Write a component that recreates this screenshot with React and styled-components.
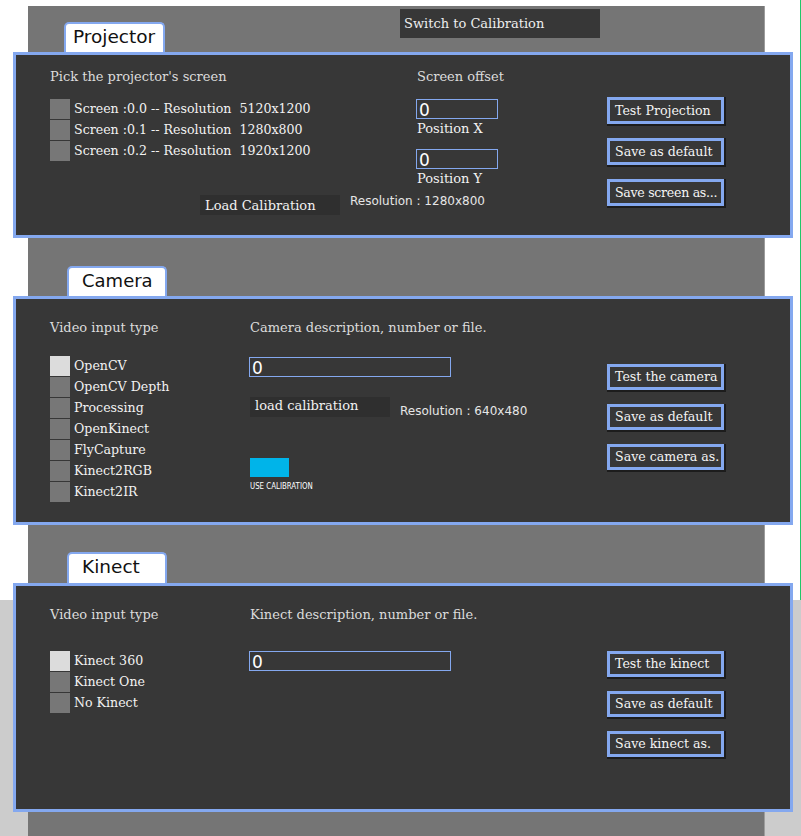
import React from 'react';
import styled, { createGlobalStyle } from 'styled-components';

const BLUE = '#84a8ef';
const PANEL = '#373737';

const GlobalStyle = createGlobalStyle`
  body {
    margin: 0;
    font-family: 'DejaVu Serif', serif;
  }
`;

const Page = styled.div`
  width: 801px;
  min-height: 836px;
  padding-top: 6px;
  box-sizing: border-box;
  overflow: hidden;
  background:
    linear-gradient(#20c86a, #20c86a) 800px 0 / 1px 600px no-repeat,
    linear-gradient(to bottom, #ffffff 600px, #cccccc 600px);
`;

const Column = styled.div`
  margin-left: 28px;
  width: 736px;
  min-height: 830px;
  background: #757575;
  border-right: 1px solid #9c9c9c;
`;

const Header = styled.div`
  display: flex;
  align-items: flex-start;
  height: 46px;
`;

const TabRow = styled.div`
  display: flex;
  align-items: flex-end;
  height: ${p => p.$h}px;
`;

const Tab = styled.div`
  margin-left: ${p => p.$left}px;
  margin-top: ${p => p.$top || 0}px;
  width: ${p => p.$w}px;
  height: ${p => p.$h || 30}px;
  box-sizing: border-box;
  background: #fff;
  border: 2px solid ${BLUE};
  border-bottom: none;
  border-radius: 5px 5px 0 0;
  padding-left: ${p => p.$pad}px;
  font-family: 'DejaVu Sans', sans-serif;
  font-size: ${p => p.$fs || 18.5}px;
  line-height: 25px;
  color: #111;
`;

const SwitchButton = styled.div`
  margin-top: 3px;
  margin-left: ${p => p.$left}px;
  width: 200px;
  height: 29px;
  background: ${PANEL};
  color: #eee;
  font-size: 13px;
  line-height: 29px;
  padding-left: 4px;
  box-sizing: border-box;
`;

const Panel = styled.div`
  margin-left: -15px;
  width: 780px;
  height: ${p => p.$h}px;
  box-sizing: border-box;
  border: 3px solid ${BLUE};
  background: ${PANEL};
  padding-left: 34px;
  display: flex;
`;

const Col = styled.div`
  width: ${p => p.$w}px;
  padding-top: ${p => p.$top}px;
  flex-shrink: 0;
  display: flex;
  flex-direction: column;
  align-items: flex-start;
`;

const Title = styled.div`
  font-size: 13px;
  line-height: 17px;
  color: #dcdcdc;
  white-space: nowrap;
`;

const RadioList = styled.div`
  margin-top: ${p => p.$mt}px;
  display: flex;
  flex-direction: column;
  gap: 1px;
`;

const RadioRow = styled.div`
  display: flex;
  align-items: center;
  height: 20px;
`;

const Square = styled.div`
  width: 20px;
  height: 20px;
  background: ${p => (p.$on ? '#dcdcdc' : '#777777')};
`;

const RadioLabel = styled.span`
  margin-left: 4px;
  margin-top: -1px;
  font-size: 12.6px;
  color: #f2f2f2;
  white-space: pre;
`;

const Field = styled.div`
  margin-top: ${p => p.$mt}px;
  margin-left: -1px;
  width: ${p => p.$w}px;
  height: 20px;
  box-sizing: border-box;
  border: 1px solid ${BLUE};
  padding-left: 2px;
  font-family: 'DejaVu Sans', sans-serif;
  font-size: 17px;
  line-height: 20px;
  color: #fff;
`;

const FieldLabel = styled.div`
  margin-top: 2px;
  font-size: 13px;
  line-height: 16px;
  color: #f2f2f2;
`;

const LoadRow = styled.div`
  margin-top: ${p => p.$mt}px;
  margin-left: ${p => p.$ml || 0}px;
  display: flex;
  align-items: center;
  white-space: nowrap;
`;

const LoadBox = styled.div`
  width: 140px;
  height: 20px;
  box-sizing: border-box;
  padding-left: ${p => p.$pad}px;
  background: #2f2f2f;
  color: #f2f2f2;
  font-size: 13px;
  line-height: ${p => p.$lh}px;
`;

const Resolution = styled.span`
  margin-left: 10px;
  margin-top: ${p => p.$mt || 0}px;
  font-family: 'DejaVu Sans', sans-serif;
  font-size: 12px;
  color: #e6e6e6;
`;

const Toggle = styled.div`
  margin-top: 40px;
  width: 39px;
  height: 19px;
  background: #00b4e9;
`;

const Caption = styled.div`
  margin-top: 4px;
  font-family: 'DejaVu Sans', sans-serif;
  font-size: 9px;
  line-height: 10px;
  color: #fff;
  white-space: nowrap;
  transform: scaleX(0.78);
  transform-origin: left center;
`;

const Buttons = styled.div`
  display: flex;
  flex-direction: column;
  gap: ${p => p.$gap}px;
`;

const Button = styled.div`
  width: 117px;
  height: ${p => p.$h}px;
  box-sizing: border-box;
  border: 3px solid ${BLUE};
  background: ${PANEL};
  box-shadow: 1px 1px 0 1px #1c1c1c;
  padding-left: 5px;
  font-size: 12.6px;
  line-height: ${p => p.$h - 6}px;
  color: #f4f4f4;
  white-space: nowrap;
  letter-spacing: ${p => (p.$tight ? '-0.3px' : '0')};
`;

const Radios = ({ items, selected, mt }) => (
  <RadioList $mt={mt}>
    {items.map((label, i) => (
      <RadioRow key={label}>
        <Square $on={i === selected} />
        <RadioLabel>{label}</RadioLabel>
      </RadioRow>
    ))}
  </RadioList>
);

const ButtonStack = ({ labels, h, gap }) => (
  <Buttons $gap={gap}>
    {labels.map(l => (
      <Button key={l} $h={h} $tight={l.length > 15}>{l}</Button>
    ))}
  </Buttons>
);

const screens = [
  'Screen :0.0 -- Resolution  5120x1200',
  'Screen :0.1 -- Resolution  1280x800',
  'Screen :0.2 -- Resolution  1920x1200',
];

const cameras = [
  'OpenCV',
  'OpenCV Depth',
  'Processing',
  'OpenKinect',
  'FlyCapture',
  'Kinect2RGB',
  'Kinect2IR',
];

const kinects = ['Kinect 360', 'Kinect One', 'No Kinect'];

export default function App() {
  return (
    <Page>
      <GlobalStyle />
      <Column>
        <Header>
          <Tab $left={36} $top={16} $w={101} $pad={7}>Projector</Tab>
          <SwitchButton $left={235}>Switch to Calibration</SwitchButton>
        </Header>

        <Panel $h={186}>
          <Col $w={367} $top={13}>
            <Title>Pick the projector's screen</Title>
            <Radios items={screens} selected={-1} mt={14} />
            <LoadRow $mt={34} $ml={150}>
              <LoadBox $pad={5} $lh={22}>Load Calibration</LoadBox>
              <Resolution $mt={-8}>Resolution : 1280x800</Resolution>
            </LoadRow>
          </Col>
          <Col $w={190} $top={13}>
            <Title>Screen offset</Title>
            <Field $mt={14} $w={82}>0</Field>
            <FieldLabel>Position X</FieldLabel>
            <Field $mt={12} $w={82}>0</Field>
            <FieldLabel>Position Y</FieldLabel>
          </Col>
          <Col $w={140} $top={42}>
            <ButtonStack
              labels={['Test Projection', 'Save as default', 'Save screen as...']}
              h={27}
              gap={14}
            />
          </Col>
        </Panel>

        <TabRow $h={58}>
          <Tab $left={39} $w={100} $pad={13} $fs={18}>Camera</Tab>
        </TabRow>

        <Panel $h={229}>
          <Col $w={200} $top={20}>
            <Title>Video input type</Title>
            <Radios items={cameras} selected={0} mt={20} />
          </Col>
          <Col $w={357} $top={20}>
            <Title>Camera description, number or file.</Title>
            <Field $mt={21} $w={202}>0</Field>
            <LoadRow $mt={19}>
              <LoadBox $pad={5} $lh={18}>load calibration</LoadBox>
              <Resolution $mt={8}>Resolution : 640x480</Resolution>
            </LoadRow>
            <Toggle />
            <Caption>USE CALIBRATION</Caption>
          </Col>
          <Col $w={140} $top={65}>
            <ButtonStack
              labels={['Test the camera', 'Save as default', 'Save camera as.']}
              h={26}
              gap={14}
            />
          </Col>
        </Panel>

        <TabRow $h={58}>
          <Tab $left={39} $w={100} $h={31} $pad={13}>Kinect</Tab>
        </TabRow>

        <Panel $h={229}>
          <Col $w={200} $top={20}>
            <Title>Video input type</Title>
            <Radios items={kinects} selected={0} mt={28} />
          </Col>
          <Col $w={357} $top={20}>
            <Title>Kinect description, number or file.</Title>
            <Field $mt={28} $w={202}>0</Field>
          </Col>
          <Col $w={140} $top={65}>
            <ButtonStack
              labels={['Test the kinect', 'Save as default', 'Save kinect as.']}
              h={26}
              gap={14}
            />
          </Col>
        </Panel>
      </Column>
    </Page>
  );
}
